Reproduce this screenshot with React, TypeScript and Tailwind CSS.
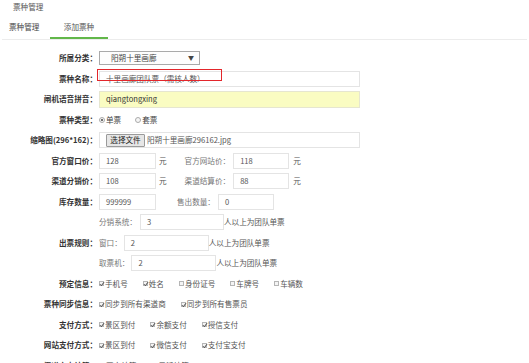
import React from 'react';

const Check = ({ on = true, label }: { on?: boolean; label: string }) => (
  <span className="flex items-center">
    <span className="relative w-[5px] h-[5px] border border-[#b5b5b5] bg-[#f4f4f4] mr-[1px]">
      {on && (
        <svg viewBox="0 0 6 6" className="absolute left-[-1px] top-[-1px] w-[6px] h-[6px]">
          <path d="M1 3.2 L2.4 4.6 L5 1.2" stroke="#444" strokeWidth="1" fill="none" />
        </svg>
      )}
    </span>
    <span className="text-[#555]">{label}</span>
  </span>
);

const Radio = ({ on = false, label }: { on?: boolean; label: string }) => (
  <span className="flex items-center">
    <span className="flex items-center justify-center w-[6px] h-[6px] rounded-full border border-[#aaa] bg-[#f6f6f6] mr-[1px]">
      {on && <span className="w-[2px] h-[2px] rounded-full bg-[#444]" />}
    </span>
    <span className="text-[#444]">{label}</span>
  </span>
);

const Row = ({ label, children }: { label?: string; children?: React.ReactNode }) => (
  <div className="flex items-center h-[20.5px]">
    <div className="w-[97px] shrink-0 text-right font-bold text-[#333]">{label}</div>
    <div className="flex items-center ml-[2px]">{children}</div>
  </div>
);

const Box = ({ w, value }: { w: string; value: string }) => (
  <div className={`${w} h-[16px] border border-[#e4e4e4] bg-white flex items-center pl-[6px] text-[#555]`}>{value}</div>
);

export default function App() {
  const payments = ['景区到付', '余额支付', '授信支付'];
  const webPayments = ['景区到付', '微信支付', '支付宝支付'];

  return (
    <div className="w-[529px] h-[363px] overflow-hidden bg-white text-[7.6px] leading-[10px] font-['Noto_Sans_CJK_SC','Microsoft_YaHei',sans-serif]">
      <div className="h-[13px] pl-[13px] flex items-center text-[#555]">票种管理</div>

      <div className="flex h-[27px] border-b border-[#ececec] mx-[2px]">
        <div className="w-[48px] h-[26px] pt-[4px] pl-[7px] flex items-center border-b-2 border-transparent text-[#444]">
          票种管理
        </div>
        <div className="w-[58px] h-[26px] pt-[4px] flex items-center justify-center border-b-2 border-[#62b74a] text-[#555]">
          添加票种
        </div>
      </div>

      <div className="pt-[8px]">
        <Row label="所属分类：">
          <div className="w-[101px] h-[14px] border border-[#a9a9a9] bg-[#fdfdfd] flex items-center justify-between pl-[11px] pr-[5px] text-[#444]">
            <span>阳朔十里画廊</span>
            <span className="text-[6px]">▼</span>
          </div>
        </Row>

        <Row label="票种名称：">
          <div className="relative">
            <Box w="w-[261px]" value="十里画廊团队票（需核人数）" />
            <div className="absolute left-[-2px] top-[-2px] w-[125px] h-[12.5px] border-[1.5px] border-[#e3262b]" />
          </div>
        </Row>

        <Row label="闸机语音拼音：">
          <div className="w-[261px] h-[17px] border border-[#e6e6d0] bg-[#fafcc2] flex items-center pl-[6px] text-[#333]">
            qiangtongxing
          </div>
        </Row>

        <Row label="票种类型：">
          <div className="flex items-center gap-[14px]">
            <Radio on label="单票" />
            <Radio label="套票" />
          </div>
        </Row>

        <Row label="缩略图(296*162)：">
          <div className="w-[261px] h-[16px] border border-[#e4e4e4] bg-white flex items-center pl-[6px] text-[#555]">
            <div className="w-[39px] h-[13px] border border-[#9a9a9a] bg-[#e6e6e6] rounded-[1px] flex items-center justify-center text-[#222]">
              选择文件
            </div>
            <span className="ml-[2px]">阳朔十里画廊296162.jpg</span>
          </div>
        </Row>

        <Row label="官方窗口价：">
          <Box w="w-[57px]" value="128" />
          <span className="ml-[3px] text-[#555]">元</span>
          <span className="ml-[18px] text-[#777]">官方网站价：</span>
          <div className="ml-[3px]">
            <Box w="w-[56px]" value="118" />
          </div>
          <span className="ml-[4px] text-[#555]">元</span>
        </Row>

        <Row label="渠道分销价：">
          <Box w="w-[57px]" value="108" />
          <span className="ml-[3px] text-[#555]">元</span>
          <span className="ml-[18px] text-[#777]">渠道结算价：</span>
          <div className="ml-[3px]">
            <Box w="w-[56px]" value="88" />
          </div>
          <span className="ml-[4px] text-[#555]">元</span>
        </Row>

        <Row label="库存数量：">
          <Box w="w-[57px]" value="999999" />
          <span className="ml-[21px] text-[#777]">售出数量：</span>
          <div className="ml-[3px]">
            <Box w="w-[56px]" value="0" />
          </div>
        </Row>

        <Row>
          <span className="text-[#777]">分销系统：</span>
          <div className="ml-[3px]">
            <Box w="w-[84px]" value="3" />
          </div>
          <span className="text-[#555]">人以上为团队单票</span>
        </Row>

        <Row label="出票规则：">
          <span className="text-[#777]">窗口：</span>
          <div className="ml-[2px]">
            <Box w="w-[85px]" value="2" />
          </div>
          <span className="text-[#555]">人以上为团队单票</span>
        </Row>

        <Row>
          <span className="text-[#777]">取票机：</span>
          <div className="ml-[2px]">
            <Box w="w-[85px]" value="2" />
          </div>
          <span className="text-[#555]">人以上为团队单票</span>
        </Row>

        <Row label="预定信息：">
          <div className="flex items-center gap-[15px]">
            <Check label="手机号" />
            <Check label="姓名" />
            <Check on={false} label="身份证号" />
            <Check on={false} label="车牌号" />
            <Check on={false} label="车辆数" />
          </div>
        </Row>

        <Row label="票种同步信息：">
          <div className="flex items-center gap-[15px]">
            <Check label="同步到所有渠道商" />
            <Check label="同步到所有售票员" />
          </div>
        </Row>

        <Row label="支付方式：">
          <div className="flex items-center gap-[15px]">
            {payments.map((p) => (
              <Check key={p} label={p} />
            ))}
          </div>
        </Row>

        <Row label="网站支付方式：">
          <div className="flex items-center gap-[15px]">
            {webPayments.map((p) => (
              <Check key={p} label={p} />
            ))}
          </div>
        </Row>

        <Row label="渠道自由结算：">
          <div className="flex items-center gap-[15px]">
            <Radio on label="固定结算" />
            <Radio label="灵活结算" />
          </div>
        </Row>
      </div>
    </div>
  );
}
